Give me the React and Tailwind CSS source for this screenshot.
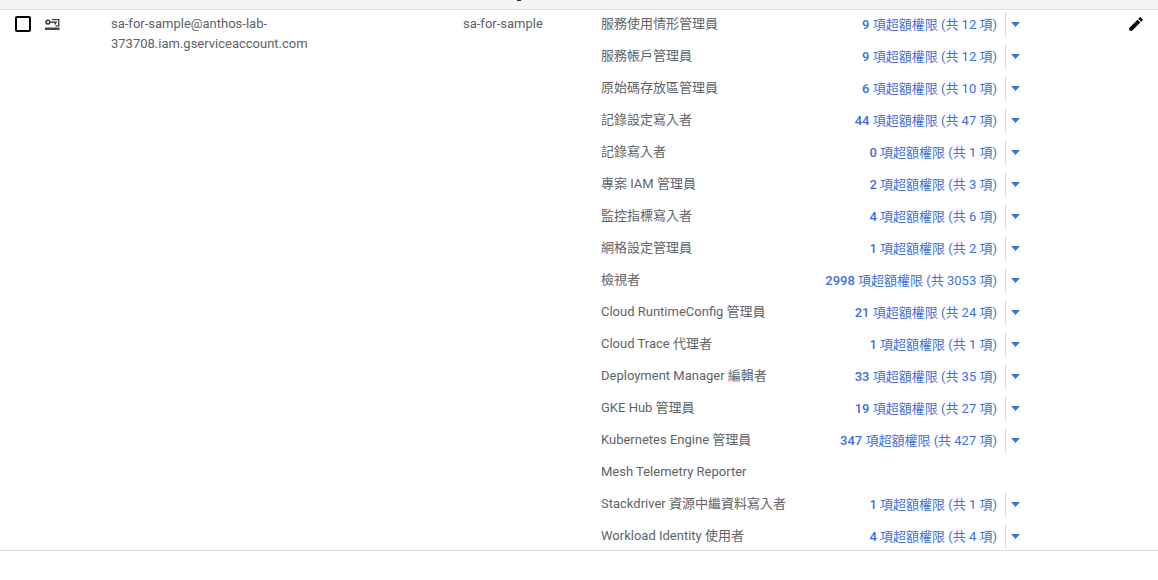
const ROLES = [
  { name: '服務使用情形管理員', used: '9', total: '12' },
  { name: '服務帳戶管理員', used: '9', total: '12' },
  { name: '原始碼存放區管理員', used: '6', total: '10' },
  { name: '記錄設定寫入者', used: '44', total: '47' },
  { name: '記錄寫入者', used: '0', total: '1' },
  { name: '專案 IAM 管理員', used: '2', total: '3' },
  { name: '監控指標寫入者', used: '4', total: '6' },
  { name: '網格設定管理員', used: '1', total: '2' },
  { name: '檢視者', used: '2998', total: '3053' },
  { name: 'Cloud RuntimeConfig 管理員', used: '21', total: '24' },
  { name: 'Cloud Trace 代理者', used: '1', total: '1' },
  { name: 'Deployment Manager 編輯者', used: '33', total: '35' },
  { name: 'GKE Hub 管理員', used: '19', total: '27' },
  { name: 'Kubernetes Engine 管理員', used: '347', total: '427' },
  { name: 'Mesh Telemetry Reporter' },
  { name: 'Stackdriver 資源中繼資料寫入者', used: '1', total: '1' },
  { name: 'Workload Identity 使用者', used: '4', total: '4' },
]

const RoleRow = ({ role }) => (
  <div className="flex h-8 items-center">
    <div className="w-[220px] shrink-0 -translate-y-px whitespace-nowrap">{role.name}</div>
    <div className="w-[176px] shrink-0 text-right text-[#3f6fd8] whitespace-nowrap">
      {role.used && (
        <>
          <span className="font-medium">{role.used}</span> 項超額權限 (共 {role.total} 項)
        </>
      )}
    </div>
    {role.used && (
      <div className="mb-0.5 ml-2 flex h-[25px] items-center border-l border-[#dadce0] pl-[5px]">
        <svg width="9" height="5" viewBox="0 0 9 5" className="fill-[#3f6fd8]">
          <path d="M0 0h9L4.500 5z" />
        </svg>
      </div>
    )}
  </div>
)

export default function App() {
  return (
    <div className="h-[580px] bg-white font-['Roboto','Noto_Sans_CJK_TC',sans-serif] text-[13px] leading-5 text-[#5f6368]">
      {/* scrolled off header, only the tails of its labels are left */}
      <div className="flex h-[10px] border-b border-[#e0e0e0] bg-[#f5f5f5] pl-[517px]">
        <div className="h-px w-1 bg-[#333]" />
      </div>

      <div className="flex h-[541px] border-b border-[#dadce0]">
        <div className="w-[45px] shrink-0 pl-[15px] pt-[6px]">
          <div className="h-4 w-4 rounded-[2px] border-2 border-black" />
        </div>
        <div className="w-[66px] shrink-0 pt-[9px]">
          <svg width="15" height="11" viewBox="0 0 15 11" className="fill-[#444]">
            <path d="M3 0.200a2.800 2.800 0 1 0 2.600 3.800H9.500v1.500h1.500V4H12V2.500H5.600A2.800 2.800 0 0 0 3 0.200zm0 1.800a1 1 0 1 1 0 2 1 1 0 0 1 0-2z" />
            <path d="M7 0h7.500v7.500H10.500V6.200h2.600V1.300H7zM0 8.500h14.500V11H0z" />
          </svg>
        </div>
        <div className="w-[352px] shrink-0 pt-[4px]">
          sa-for-sample@anthos-lab-
          <br />
          373708.iam.gserviceaccount.com
        </div>
        <div className="w-[138px] shrink-0 pt-[4px]">sa-for-sample</div>
        <div className="-mt-px w-[430px] shrink-0">
          {ROLES.map(role => (
            <RoleRow key={role.name} role={role} />
          ))}
        </div>
        <div className="flex-1 pl-[96px] pt-[5px]">
          <svg width="18" height="18" viewBox="0 0 24 24" className="fill-black">
            <path d="M3 17.250V21h3.750L17.810 9.940l-3.750-3.750L3 17.250zM20.710 7.040c.39-.39.39-1.020 0-1.410l-2.340-2.340c-.39-.39-1.020-.39-1.410 0l-1.830 1.830 3.750 3.750 1.830-1.830z" />
          </svg>
        </div>
      </div>
    </div>
  )
}
